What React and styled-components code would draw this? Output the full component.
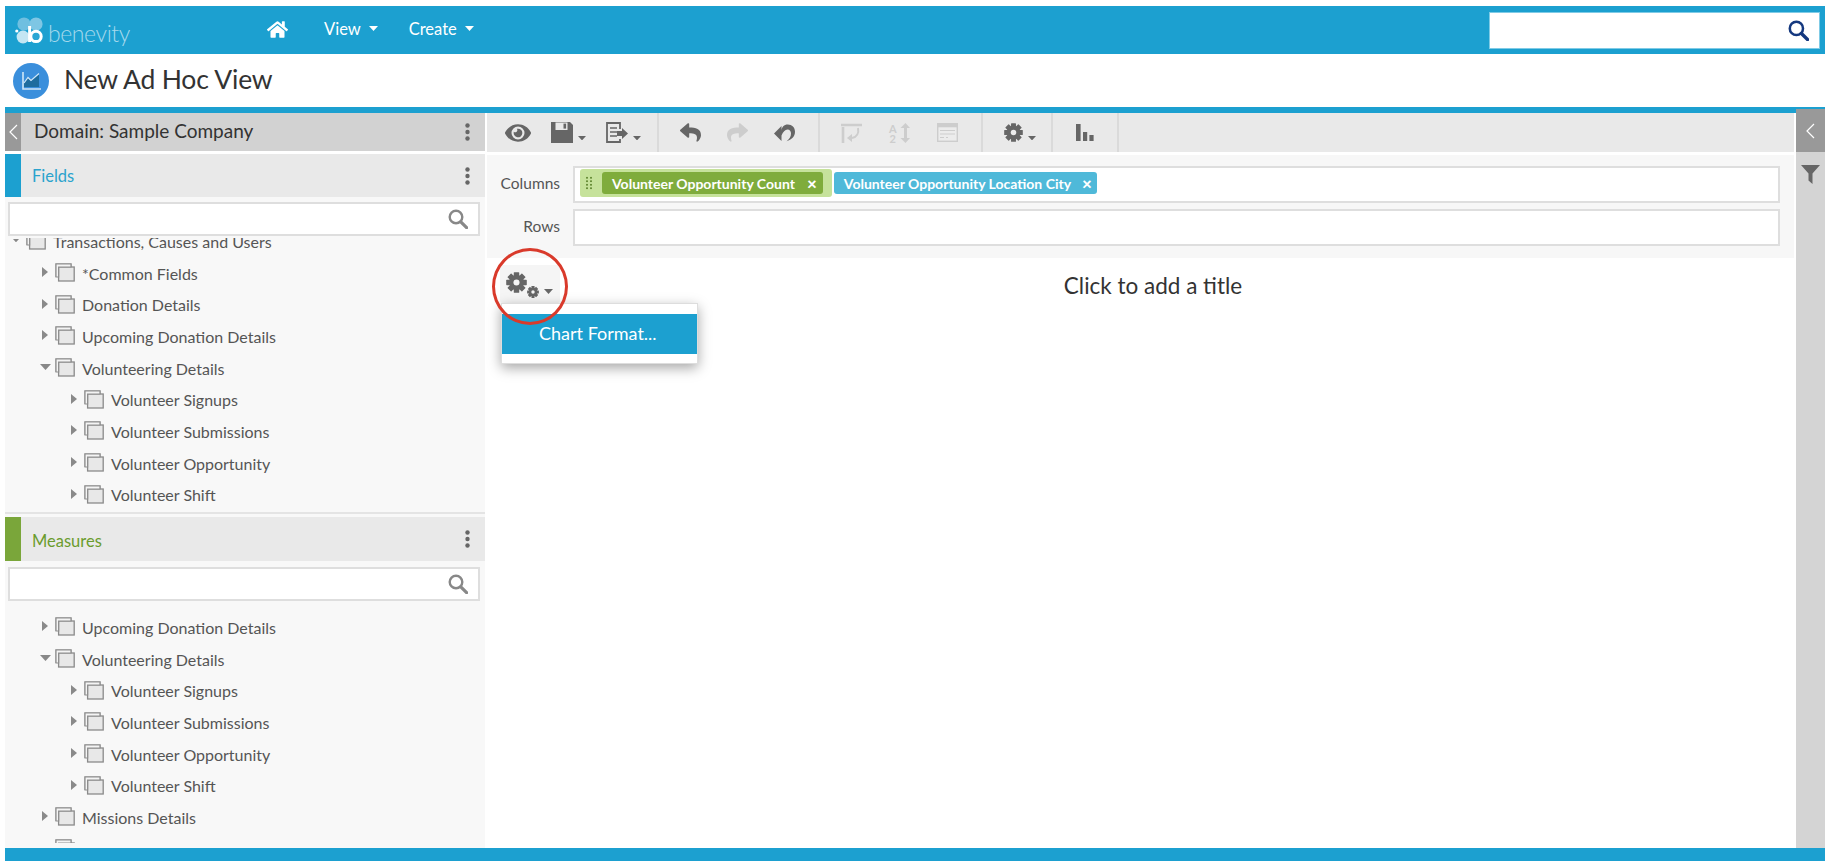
import React from "react";
import styled, { createGlobalStyle } from "styled-components";
import { FaEye, FaHome, FaReply, FaShare } from "react-icons/fa";

const BLUE = "#1ca0d0";

const GlobalStyle = createGlobalStyle`
  html, body {
    margin: 0;
    background: #fff;
    font-family: "Lato", "Open Sans", sans-serif;
    color: #333;
  }
`;

const Caret = ({ size = 8, color = "#666" }) => (
  <svg width={size} height={size * 0.55} viewBox="0 0 10 5.5">
    <polygon points="0,0 10,0 5,5.5" fill={color} />
  </svg>
);

const SearchGlyph = ({ color = "#888", size = 20 }) => (
  <svg width={size} height={size} viewBox="0 0 20 20" fill="none" stroke={color}>
    <circle cx="8" cy="8" r="6.3" strokeWidth="2.4" />
    <line x1="12.8" y1="12.8" x2="18.6" y2="18.6" strokeWidth="3.2" strokeLinecap="round" />
  </svg>
);

const Kebab = () => (
  <svg width="5" height="18" viewBox="0 0 5 18" fill="#666">
    <circle cx="2.5" cy="2.5" r="2.2" />
    <circle cx="2.5" cy="9" r="2.2" />
    <circle cx="2.5" cy="15.5" r="2.2" />
  </svg>
);

const Chevron = () => (
  <svg width="9" height="16" viewBox="0 0 9 16" fill="none" stroke="#fff" strokeWidth="1.2">
    <polyline points="8,1 1,8 8,15" />
  </svg>
);

const FolderGlyph = () => (
  <svg width="20" height="19" viewBox="0 0 20 19">
    <path d="M1 14V1h15v3" fill="none" stroke="#999" strokeWidth="1.3" />
    <rect x="3.6" y="4" width="15.6" height="14" fill="#e8e8e8" stroke="#8a8a8a" strokeWidth="1.3" />
    <path d="M1 1h15v3H3.6v10H1z" fill="#f4f4f4" stroke="#8f8f8f" strokeWidth="1.2" />
  </svg>
);

const Gear = ({ size = 20, color = "#666", hole = "#ececec" }) => (
  <svg width={size} height={size} viewBox="0 0 20 20" fill={color}>
    {[0, 45, 90, 135].map((deg) => (
      <rect key={deg} x="7.4" y="0.2" width="5.2" height="19.6" rx="0.6" transform={`rotate(${deg} 10 10)`} />
    ))}
    <circle cx="10" cy="10" r="7.2" />
    <circle cx="10" cy="10" r="2.9" fill={hole} />
  </svg>
);

const LogoMark = () => (
  <svg width="28" height="27" viewBox="0 0 28 27">
    <circle cx="9" cy="7" r="6.6" fill="#6fbfe0" />
    <circle cx="21" cy="7" r="6.6" fill="#7ec6e4" />
    <circle cx="8" cy="20" r="6.4" fill="#c4e6f3" />
    <circle cx="1.8" cy="14" r="1.6" fill="#fff" />
    <circle cx="21" cy="19.4" r="5.2" fill="#2aa6d4" stroke="#fff" strokeWidth="3" />
    <line x1="14.6" y1="9" x2="14.6" y2="25" stroke="#fff" strokeWidth="3" />
  </svg>
);

const ChartGlyph = () => (
  <svg width="19" height="18" viewBox="0 0 19 18">
    <polygon points="2,11 6,6 9,9 17,2 17,15 2,15" fill="#1d6c9e" />
    <polyline points="2,11 6,5.5 9,8.5 17,1.5" fill="none" stroke="#cfe6f7" strokeWidth="1.2" />
    <polyline points="1,0 1,17 19,17" fill="none" stroke="#cfe6f7" strokeWidth="1.6" />
  </svg>
);

const DiskGlyph = () => (
  <svg width="22" height="21" viewBox="0 0 22 21" fill="#666">
    <path d="M0 0h19l3 3v18H0z" />
    <rect x="4.5" y="0.5" width="12" height="7.5" fill="#e9e9e9" />
    <rect x="12.5" y="1.6" width="2.6" height="5" fill="#666" />
  </svg>
);

const ExportGlyph = () => (
  <svg width="22" height="21" viewBox="0 0 22 21" fill="none" stroke="#666">
    <path d="M14 7V1H1v19h13v-3" strokeWidth="1.8" />
    <path d="M4 6h7M4 10h7M4 14h7" strokeWidth="1.6" />
    <polygon points="11,9 16,9 16,6 22,11.5 16,17 16,14 11,14" fill="#666" stroke="none" />
  </svg>
);

const UndoAllGlyph = () => (
  <svg width="21" height="18" viewBox="0 0 21 18" fill="#666">
    <path d="M0 9.5 7.5 17V11.5C9 8 11 5.5 13.5 5.5 15.8 5.5 17 7.2 17 9.6c0 3-1.6 5.5-4.4 7.6 5-1.2 8.4-4.8 8.4-9.4C21 3.4 18 .5 13.8.5 10 .5 7.6 3 7.5 7V2z" />
  </svg>
);

const SwitchGlyph = () => (
  <svg width="21" height="20" viewBox="0 0 21 20" fill="none" stroke="#cdcdcd" strokeWidth="2.6">
    <path d="M2 20V4M0 2h21" />
    <path d="M17 5c1 5-1 9-6 10" strokeWidth="2" />
    <polygon points="11,11 11,19 6,15" fill="#cdcdcd" stroke="none" />
  </svg>
);

const SortGlyph = () => (
  <svg width="21" height="20" viewBox="0 0 21 20" fill="#cdcdcd" overflow="visible">
    <text x="0" y="9.5" fontSize="11" fontWeight="700" fontFamily="Lato, sans-serif">A</text>
    <text x="0.6" y="20" fontSize="11" fontWeight="700" fontFamily="Lato, sans-serif">2</text>
    <rect x="15" y="4" width="3" height="12" />
    <polygon points="11.5,5 16.5,0 21,5" />
    <polygon points="11.5,15 16.5,20 21,15" />
  </svg>
);

const TableGlyph = () => (
  <svg width="21" height="19" viewBox="0 0 21 19">
    <rect x="0.7" y="0.7" width="19.6" height="17.6" fill="#ececec" stroke="#cdcdcd" strokeWidth="1.4" />
    <rect x="0.7" y="0.7" width="19.6" height="3.6" fill="#cdcdcd" />
    <path d="M3 7.5h15M3 11h15M3 14.5h4M9 14.5h2" stroke="#cdcdcd" strokeWidth="1.2" />
  </svg>
);

const BarsGlyph = () => (
  <svg width="18" height="17" viewBox="0 0 18 17" fill="#666">
    <rect x="0" y="0" width="4.6" height="17" />
    <rect x="7" y="8" width="4.2" height="9" />
    <rect x="13.4" y="11" width="4.2" height="6" />
  </svg>
);

const FunnelGlyph = () => (
  <svg width="19" height="19" viewBox="0 0 19 19" fill="#666">
    <polygon points="0,0 19,0 11.5,8.5 11.5,19 7.5,15.5 7.5,8.5" />
  </svg>
);

const Page = styled.div`
  box-sizing: border-box;
  height: 868px;
  padding: 6px 7px 7px 5px;
  display: flex;
  flex-direction: column;
  overflow: hidden;
`;

const NavBar = styled.header`
  flex: none;
  height: 48px;
  background: ${BLUE};
  display: flex;
  align-items: center;
  padding: 0 5px 0 10px;
`;

const Logo = styled.div`
  width: 252px;
  display: flex;
  align-items: center;
  gap: 5px;
`;

const LogoWord = styled.span`
  font-size: 23px;
  font-weight: 300;
  letter-spacing: -0.4px;
  line-height: 26px;
  padding-top: 5px;
  color: #a5d9ec;
`;

const NavItems = styled.nav`
  display: flex;
  align-items: center;
  color: #fff;
  font-size: 16.5px;
`;

const HomeLink = styled.span`
  display: flex;
  margin-right: 36px;
  margin-top: -2px;
`;

const NavLink = styled.span`
  display: flex;
  align-items: center;
  gap: 8px;
  margin-right: 31px;
  margin-top: -3px;
`;

const NavSearch = styled.div`
  margin-left: auto;
  margin-top: 1px;
  box-sizing: border-box;
  width: 331px;
  height: 37px;
  background: #fff;
  border: 1px solid #7fcbe6;
  display: flex;
  align-items: center;
  justify-content: flex-end;
  padding-right: 10px;
`;

const TitleBar = styled.div`
  flex: none;
  height: 53px;
  display: flex;
  align-items: center;
  gap: 15px;
  padding-left: 8px;
`;

const TitleBadge = styled.div`
  width: 36px;
  height: 36px;
  border-radius: 50%;
  background: #3a8fdc;
  display: flex;
  align-items: center;
  justify-content: center;
`;

const PageTitle = styled.h1`
  margin: 0 0 3px;
  font-size: 26.5px;
  font-weight: 400;
  color: #333;
  letter-spacing: -0.2px;
`;

const TopStrip = styled.div`
  flex: none;
  height: 6px;
  background: ${BLUE};
`;

const Body = styled.div`
  flex: 1;
  min-height: 0;
  display: flex;
  gap: 2px;
`;

const SidePanel = styled.aside`
  width: 480px;
  flex: none;
  display: flex;
  flex-direction: column;
`;

const DomainHeader = styled.div`
  flex: none;
  height: 38px;
  background: #d2d2d2;
  display: flex;
  align-items: center;
  margin-bottom: 3px;
`;

const Collapser = styled.div`
  width: 16px;
  align-self: stretch;
  background: #999;
  display: flex;
  align-items: center;
  justify-content: center;
`;

const DomainLabel = styled.span`
  margin: 0 0 4px 13px;
  font-size: 19px;
  color: #333;
`;

const KebabSlot = styled.span`
  margin-left: auto;
  margin-right: 15px;
  display: flex;
`;

const Section = styled.section`
  flex: none;
  height: ${(p) => p.$height}px;
  display: flex;
  flex-direction: column;
  background: #f8f8f8;
  padding-bottom: ${(p) => p.$bottom}px;
  box-sizing: border-box;
`;

const SectionHeader = styled.div`
  flex: none;
  height: ${(p) => (p.$tall ? 44 : 43)}px;
  background: #e9e9e9;
  display: flex;
  align-items: center;
`;

const Accent = styled.div`
  width: 16px;
  align-self: stretch;
  background: ${(p) => p.$color};
`;

const SectionLabel = styled.span`
  margin: ${(p) => (p.$nudge ? "3px" : "0")} 0 0 11px;
  font-size: 16.5px;
  color: ${(p) => p.$color};
`;

const SearchBox = styled.div`
  flex: none;
  box-sizing: border-box;
  height: 34px;
  margin: ${(p) => (p.$tall ? 6 : 5)}px 5px 0 3px;
  background: #fff;
  border: 2px solid #dedede;
  display: flex;
  align-items: center;
  justify-content: flex-end;
  padding-right: 10px;
`;

const Tree = styled.div`
  flex: 1;
  min-height: 0;
  overflow: hidden;
  margin-top: ${(p) => (p.$rule ? 2 : 0)}px;
  border-bottom: ${(p) => (p.$rule ? "2px solid #e4e4e4" : "none")};
`;

const TreeList = styled.div`
  margin-top: ${(p) => p.$offset}px;
`;

const TreeRow = styled.div`
  height: 31.7px;
  display: flex;
  align-items: center;
  padding-left: ${(p) => 1 + p.$level * 29}px;
  font-size: 16px;
  color: #555;
`;

const RowText = styled.span`
  margin-top: -1px;
  white-space: nowrap;
`;

const Toggle = styled.span`
  width: 20px;
  display: flex;
  justify-content: center;
  margin-top: -3px;
`;

const OpenArrow = styled.span`
  width: 0;
  height: 0;
  border-left: 6px solid #8a8a8a;
  border-top: 5px solid transparent;
  border-bottom: 5px solid transparent;
`;

const Folder = styled.span`
  display: flex;
  margin-right: 7px;
  margin-top: -2px;
`;

const Main = styled.main`
  flex: 1;
  min-width: 0;
  display: flex;
  flex-direction: column;
`;

const Toolbar = styled.div`
  flex: none;
  height: 39px;
  background: #e9e9e9;
  display: flex;
  margin-bottom: 3px;
`;

const ToolGroup = styled.div`
  box-sizing: border-box;
  width: ${(p) => p.$width}px;
  padding-left: ${(p) => p.$pad}px;
  display: flex;
  align-items: center;
  gap: ${(p) => p.$gap || 0}px;
  border-right: 2px solid #dadada;
  color: #666;
`;

const ToolButton = styled.span`
  display: flex;
  align-items: center;
  gap: 5px;
  color: ${(p) => (p.$muted ? "#cdcdcd" : "#666")};
`;

const CaretDrop = styled.span`
  display: flex;
  margin-top: 11px;
`;

const FilterArea = styled.div`
  flex: none;
  height: 103px;
  box-sizing: border-box;
  background: #f7f7f7;
  padding: 11px 14px 0 0;
  display: flex;
  flex-direction: column;
  gap: 6px;
`;

const FilterRow = styled.div`
  display: flex;
  align-items: center;
  gap: 13px;
`;

const FilterLabel = styled.span`
  width: 73px;
  text-align: right;
  font-size: 15.5px;
  margin-top: -3px;
  color: #555;
`;

const DropZone = styled.div`
  flex: 1;
  box-sizing: border-box;
  height: 37px;
  background: #fff;
  border: 2px solid #dedede;
  display: flex;
  align-items: center;
  padding: 0 0 3px 5px;
  gap: 2px;
`;

const PillHolder = styled.div`
  height: 28px;
  box-sizing: border-box;
  background: #c6e29b;
  border-radius: 3px;
  display: flex;
  align-items: center;
  padding: 0 9px 0 5px;
  gap: 9px;
`;

const DragDots = styled.span`
  width: 8px;
  height: 14px;
  background-image: radial-gradient(circle, #6a8f3a 1.1px, transparent 1.3px);
  background-size: 4px 3.5px;
`;

const Pill = styled.span`
  height: 22px;
  box-sizing: border-box;
  background: ${(p) => p.$color};
  border-radius: 3px;
  display: flex;
  align-items: center;
  padding: 0 ${(p) => p.$end}px 0 10px;
  gap: ${(p) => p.$gap}px;
  color: #fff;
  font-size: 14px;
  font-weight: 700;
`;

const PillClose = styled.span`
  font-size: 17px;
  line-height: 15px;
  font-weight: 900;
`;

const Canvas = styled.div`
  flex: 1;
  min-height: 0;
  position: relative;
  display: flex;
  padding: 7px 0 0 13px;
`;

const GearButton = styled.div`
  width: 60px;
  height: 38px;
  flex: none;
  box-sizing: border-box;
  background: #f5f5f5;
  border-radius: 3px;
  display: flex;
  padding: 7px 0 0 6px;
  color: #666;
`;

const SmallGear = styled.span`
  display: flex;
  margin-top: 14px;
`;

const GearCaret = styled.span`
  display: flex;
  margin: 17px 0 0 5px;
`;

const ChartTitle = styled.div`
  flex: 1;
  height: 42px;
  line-height: 42px;
  text-align: center;
  padding-right: 48px;
  font-size: 22.5px;
  color: #333;
`;

const Highlight = styled.div`
  position: absolute;
  left: 5px;
  top: -10px;
  width: 76px;
  height: 77px;
  box-sizing: border-box;
  border: 3px solid #d93a2b;
  border-radius: 50%;
  z-index: 3;
  pointer-events: none;
`;

const Menu = styled.div`
  position: absolute;
  left: 14px;
  top: 45px;
  width: 197px;
  height: 61px;
  box-sizing: border-box;
  background: #fff;
  border: 1px solid #ddd;
  padding-top: 10px;
  box-shadow: 0 4px 12px rgba(0, 0, 0, 0.35);
  z-index: 2;
`;

const MenuItem = styled.div`
  height: 40px;
  background: ${BLUE};
  color: #fff;
  font-size: 18px;
  line-height: 38px;
  padding-left: 37px;
`;

const Rail = styled.aside`
  flex: none;
  width: 29px;
  margin-top: -4px;
  background: #d4d4d4;
  display: flex;
  flex-direction: column;
  align-items: center;
  position: relative;
`;

const RailToggle = styled.div`
  align-self: stretch;
  height: 43px;
  background: #999;
  display: flex;
  align-items: center;
  justify-content: center;
  margin-bottom: 13px;
`;

const Footer = styled.footer`
  flex: none;
  height: 13px;
  background: ${BLUE};
`;

const fieldRows = [
  { level: 0, open: "small", label: "Transactions, Causes and Users" },
  { level: 1, label: "*Common Fields" },
  { level: 1, label: "Donation Details" },
  { level: 1, label: "Upcoming Donation Details" },
  { level: 1, open: true, label: "Volunteering Details" },
  { level: 2, label: "Volunteer Signups" },
  { level: 2, label: "Volunteer Submissions" },
  { level: 2, label: "Volunteer Opportunity" },
  { level: 2, label: "Volunteer Shift" },
];

const measureRows = [
  { level: 1, label: "Upcoming Donation Details" },
  { level: 1, open: true, label: "Volunteering Details" },
  { level: 2, label: "Volunteer Signups" },
  { level: 2, label: "Volunteer Submissions" },
  { level: 2, label: "Volunteer Opportunity" },
  { level: 2, label: "Volunteer Shift" },
  { level: 1, label: "Missions Details" },
  { level: 1, label: "" },
];

const Rows = ({ rows, offset, rule }) => (
  <Tree $rule={rule}>
    <TreeList $offset={offset}>
      {rows.map((row, i) => (
        <TreeRow key={i} $level={row.level}>
          <Toggle>
            {row.open === "small" && <Caret size={6} color="#888" />}
            {row.open === true && <Caret size={11} color="#888" />}
            {!row.open && <OpenArrow />}
          </Toggle>
          <Folder>
            <FolderGlyph />
          </Folder>
          <RowText>{row.label}</RowText>
        </TreeRow>
      ))}
    </TreeList>
  </Tree>
);

export default function App() {
  return (
    <Page>
      <GlobalStyle />
      <NavBar>
        <Logo>
          <LogoMark />
          <LogoWord>benevity</LogoWord>
        </Logo>
        <NavItems>
          <HomeLink>
            <FaHome size={21} />
          </HomeLink>
          <NavLink>
            View <Caret size={9} color="#fff" />
          </NavLink>
          <NavLink>
            Create <Caret size={9} color="#fff" />
          </NavLink>
        </NavItems>
        <NavSearch>
          <SearchGlyph color="#14387f" size={21} />
        </NavSearch>
      </NavBar>

      <TitleBar>
        <TitleBadge>
          <ChartGlyph />
        </TitleBadge>
        <PageTitle>New Ad Hoc View</PageTitle>
      </TitleBar>
      <TopStrip />

      <Body>
        <SidePanel>
          <DomainHeader>
            <Collapser>
              <Chevron />
            </Collapser>
            <DomainLabel>Domain: Sample Company</DomainLabel>
            <KebabSlot>
              <Kebab />
            </KebabSlot>
          </DomainHeader>

          <Section $height={363} $bottom={3}>
            <SectionHeader>
              <Accent $color={BLUE} />
              <SectionLabel $color="#2ba3cd">Fields</SectionLabel>
              <KebabSlot>
                <Kebab />
              </KebabSlot>
            </SectionHeader>
            <SearchBox>
              <SearchGlyph />
            </SearchBox>
            <Rows rows={fieldRows} offset={-12} rule />
          </Section>
          <Section $height={331} $bottom={5}>
            <SectionHeader $tall>
              <Accent $color="#7aa63a" />
              <SectionLabel $color="#6b9c2e" $nudge>
                Measures
              </SectionLabel>
              <KebabSlot>
                <Kebab />
              </KebabSlot>
            </SectionHeader>
            <SearchBox $tall>
              <SearchGlyph />
            </SearchBox>
            <Rows rows={measureRows} offset={11} />
          </Section>
        </SidePanel>

        <Main>
          <Toolbar>
            <ToolGroup $width={172} $pad={18} $gap={20}>
              <ToolButton>
                <FaEye size={26} />
              </ToolButton>
              <ToolButton>
                <DiskGlyph />
                <CaretDrop>
                  <Caret />
                </CaretDrop>
              </ToolButton>
              <ToolButton>
                <ExportGlyph />
                <CaretDrop>
                  <Caret />
                </CaretDrop>
              </ToolButton>
            </ToolGroup>
            <ToolGroup $width={161} $pad={21} $gap={26}>
              <ToolButton>
                <FaReply size={21} />
              </ToolButton>
              <ToolButton $muted>
                <FaShare size={21} />
              </ToolButton>
              <ToolButton>
                <UndoAllGlyph />
              </ToolButton>
            </ToolGroup>
            <ToolGroup $width={163} $pad={21} $gap={27}>
              <ToolButton>
                <SwitchGlyph />
              </ToolButton>
              <ToolButton>
                <SortGlyph />
              </ToolButton>
              <ToolButton>
                <TableGlyph />
              </ToolButton>
            </ToolGroup>
            <ToolGroup $width={70} $pad={21}>
              <ToolButton>
                <Gear size={19} />
                <CaretDrop>
                  <Caret />
                </CaretDrop>
              </ToolButton>
            </ToolGroup>
            <ToolGroup $width={66} $pad={23}>
              <ToolButton>
                <BarsGlyph />
              </ToolButton>
            </ToolGroup>
          </Toolbar>

          <FilterArea>
            <FilterRow>
              <FilterLabel>Columns</FilterLabel>
              <DropZone>
                <PillHolder>
                  <DragDots />
                  <Pill $color="#7fac3c" $gap={12} $end={6}>
                    Volunteer Opportunity Count <PillClose>×</PillClose>
                  </Pill>
                </PillHolder>
                <Pill $color="#4fb9d9" $gap={11} $end={5}>
                  Volunteer Opportunity Location City <PillClose>×</PillClose>
                </Pill>
              </DropZone>
            </FilterRow>
            <FilterRow>
              <FilterLabel>Rows</FilterLabel>
              <DropZone />
            </FilterRow>
          </FilterArea>

          <Canvas>
            <GearButton>
              <Gear size={21} hole="#f5f5f5" />
              <SmallGear>
                <Gear size={12} hole="#f5f5f5" />
              </SmallGear>
              <GearCaret>
                <Caret size={9} />
              </GearCaret>
            </GearButton>
            <ChartTitle>Click to add a title</ChartTitle>
            <Highlight />
            <Menu>
              <MenuItem>Chart Format...</MenuItem>
            </Menu>
          </Canvas>
        </Main>

        <Rail>
          <RailToggle>
            <Chevron />
          </RailToggle>
          <FunnelGlyph />
        </Rail>
      </Body>
      <Footer />
    </Page>
  );
}
